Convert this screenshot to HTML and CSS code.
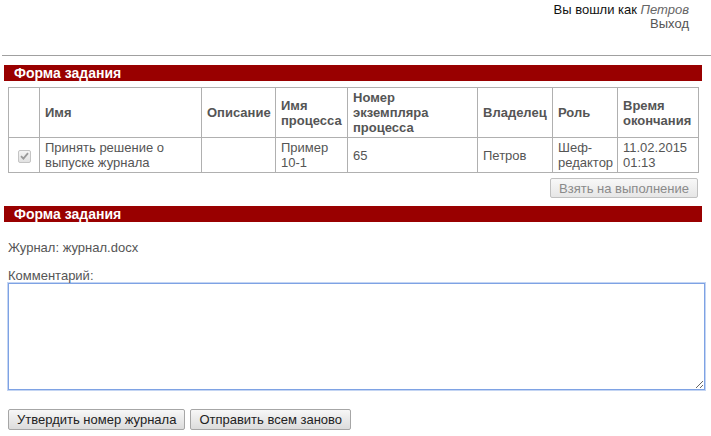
FILE: index.html
```html
<!DOCTYPE html>
<html lang="ru">

<head>
  <meta charset="UTF-8">
  <meta name="viewport" content="width=device-width, initial-scale=1.0">
  <title>Форма задания</title>
  <link rel="stylesheet" href="styles.css">
</head>

<body>
  <div class="user-info">
    <div>Вы вошли как <em>Петров</em></div>
    <a class="logout" href="#">Выход</a>
  </div>
  <hr class="divider">

  <div class="section-title">Форма задания</div>
  <div class="task-list">
    <table class="tasks">
      <colgroup>
        <col style="width: 31px">
        <col style="width: 162px">
        <col style="width: 74px">
        <col style="width: 72px">
        <col style="width: 130px">
        <col style="width: 75px">
        <col style="width: 65px">
        <col style="width: 81px">
      </colgroup>
      <thead>
        <tr>
          <th></th>
          <th>Имя</th>
          <th>Описание</th>
          <th>Имя процесса</th>
          <th>Номер экземпляра процесса</th>
          <th>Владелец</th>
          <th>Роль</th>
          <th>Время окончания</th>
        </tr>
      </thead>
      <tbody>
        <tr>
          <td class="check-cell">
            <span class="checkbox">
              <svg width="9" height="8" viewBox="0 0 9 8"><path d="M1 4.2 L3.4 6.6 L8 1.2" fill="none" stroke="#9a9a9a" stroke-width="1.8"/></svg>
            </span>
          </td>
          <td>Принять решение о выпуске журнала</td>
          <td></td>
          <td>Пример 10-1</td>
          <td>65</td>
          <td>Петров</td>
          <td>Шеф-редактор</td>
          <td>11.02.2015 01:13</td>
        </tr>
      </tbody>
    </table>
    <div class="list-actions">
      <button class="btn" disabled>Взять на выполнение</button>
    </div>
  </div>

  <div class="section-title">Форма задания</div>
  <div class="task-form">
    <p class="field">Журнал: журнал.docx</p>
    <label class="field-label" for="comment">Комментарий:</label>
    <textarea id="comment" class="comment"></textarea>
    <div class="form-actions">
      <button class="btn">Утвердить номер журнала</button>
      <button class="btn">Отправить всем заново</button>
    </div>
  </div>
</body>

</html>
```

FILE: styles.css
```css
body {
  margin: 0;
  font-family: "Liberation Sans", Arial, sans-serif;
  font-size: 13px;
  color: #555;
  background: #fff;
}

.user-info {
  padding: 3px 22px 0 0;
  text-align: right;
  line-height: 14px;
  color: #111;
}

.user-info em {
  color: #666;
}

.user-info .logout {
  color: #555;
  text-decoration: none;
}

.divider {
  margin: 24px 0 0 2px;
  border: 0;
  border-top: 1px solid #a0a0a0;
  height: 0;
}

.section-title {
  margin: 9px 9px 0 4px;
  height: 16px;
  line-height: 16px;
  padding-left: 10px;
  background: #990000;
  color: #fff;
  font-size: 14px;
  font-weight: bold;
}

.task-list {
  padding: 6px 13px 0 8px;
}

.task-list + .section-title {
  margin-top: 8px;
}

.tasks {
  width: 100%;
  table-layout: fixed;
  border-collapse: collapse;
}

.tasks th,
.tasks td {
  border: 1px solid #b0b0b0;
  padding: 2px 5px;
  line-height: 15px;
  text-align: left;
  vertical-align: middle;
}

.tasks th {
  font-weight: bold;
  height: 45px;
}

.tasks td {
  height: 30px;
}

.tasks .check-cell {
  text-align: center;
}

.checkbox {
  display: inline-flex;
  align-items: center;
  justify-content: center;
  width: 11px;
  height: 11px;
  border: 1px solid #c4c4c4;
  border-radius: 2px;
  background: linear-gradient(#f4f4f4, #e2e2e2);
  vertical-align: middle;
}

.list-actions {
  display: flex;
  justify-content: flex-end;
  margin-top: 5px;
}

.btn {
  height: 21px;
  padding: 0 8px;
  font-family: "Liberation Sans", Arial, sans-serif;
  font-size: 13px;
  color: #222;
  background: linear-gradient(#f7f7f7, #dcdcdc);
  border: 1px solid #a6a6a6;
  border-radius: 2px;
}

.btn:disabled {
  color: #8a8a8a;
  border-color: #c0c0c0;
  background: linear-gradient(#f8f8f8, #e6e6e6);
}

.list-actions .btn {
  height: 20px;
  padding: 0 8px;
}

.task-form {
  padding: 0 6px 0 8px;
}

.field {
  margin: 18px 0 0;
  line-height: 15px;
}

.field-label {
  display: block;
  margin-top: 13px;
  line-height: 15px;
}

.comment {
  display: block;
  box-sizing: border-box;
  width: 100%;
  height: 107px;
  margin: 0;
  border: 1px solid #7ea2e4;
  box-shadow: 0 0 0 1px #c4d5f3;
  outline: none;
  font-family: "Liberation Sans", Arial, sans-serif;
  font-size: 13px;
}

.form-actions {
  display: flex;
  gap: 5px;
  margin-top: 19px;
}
```
